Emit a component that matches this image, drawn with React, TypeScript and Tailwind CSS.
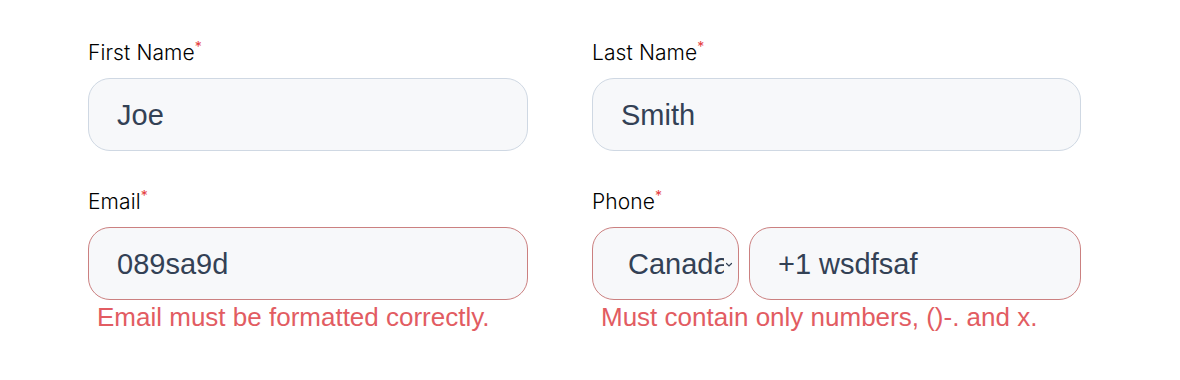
import React from 'react';

const labelFont = { fontFamily: 'Inter, "Noto Sans", sans-serif' };

function Label({ children }: { children: React.ReactNode }) {
  return (
    <label className="block h-[24px] text-[21px] font-light leading-[24px] text-black tracking-[0.1px]" style={labelFont}>
      {children}
      <span className="relative -top-[8px] text-[14px] font-normal text-[#e53e3e]">*</span>
    </label>
  );
}

function Field({ value, error }: { value: string; error?: boolean }) {
  return (
    <input
      readOnly
      value={value}
      className={`h-[73px] w-full rounded-[22px] border bg-[#f7f8fa] pl-[28px] pt-[2px] text-[29px] text-[#334155] outline-none font-['Liberation_Sans',Arial,sans-serif] ${
        error ? 'border-[#cb8080]' : 'border-[#cfd8e3]'
      }`}
    />
  );
}

function ErrorText({ children }: { children: React.ReactNode }) {
  return (
    <p className="mt-[2px] pl-[9px] text-[26px] leading-[30px] text-[#e25c62] font-['Liberation_Sans',Arial,sans-serif]">
      {children}
    </p>
  );
}

export default function App() {
  return (
    <div className="h-[380px] w-[1180px] bg-white pl-[88px] pt-[41px]">
      <div className="grid grid-cols-[440px_489px] gap-x-[64px] gap-y-[39px]">
        <div>
          <Label>First Name</Label>
          <div className="mt-[13px]">
            <Field value="Joe" />
          </div>
        </div>
        <div>
          <Label>Last Name</Label>
          <div className="mt-[13px]">
            <Field value="Smith" />
          </div>
        </div>
        <div>
          <Label>Email</Label>
          <div className="mt-[13px]">
            <Field value="089sa9d" error />
          </div>
          <ErrorText>Email must be formatted correctly.</ErrorText>
        </div>
        <div>
          <Label>Phone</Label>
          <div className="mt-[13px] flex gap-[10px]">
            <div className="relative flex h-[73px] w-[147px] shrink-0 items-center overflow-hidden rounded-[22px] border border-[#cb8080] bg-[#f7f8fa] pl-[35px] pt-[2px]">
              <span className="block w-[96px] overflow-hidden whitespace-nowrap text-[29px] text-[#334155] font-['Liberation_Sans',Arial,sans-serif]">
                Canada
              </span>
              <svg className="absolute right-[5px] top-[34px]" width="8" height="6" viewBox="0 0 8 6" fill="none">
                <path d="M1.5 1.5 4 4l2.5-2.5" stroke="#334155" strokeWidth="1.2" strokeLinecap="round" />
              </svg>
            </div>
            <div className="flex-1">
              <Field value="+1 wsdfsaf" error />
            </div>
          </div>
          <ErrorText>Must contain only numbers, ()-. and x.</ErrorText>
        </div>
      </div>
    </div>
  );
}
